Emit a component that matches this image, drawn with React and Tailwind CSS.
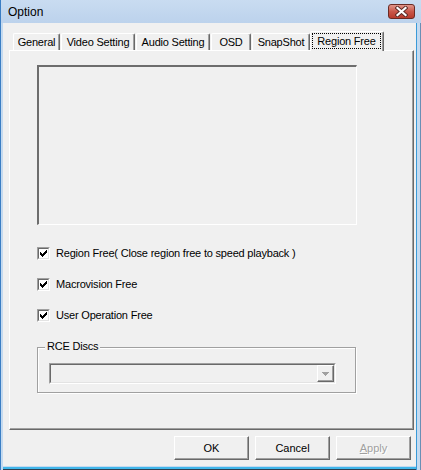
import React from 'react';

const font = "font-['Liberation_Sans',Arial,sans-serif]";

const tabs = [
  { label: 'General', w: 'w-[47px]', gap: '' },
  { label: 'Video Setting', w: 'w-[74px]', gap: 'ml-[1px]' },
  { label: 'Audio Setting', w: 'w-[74px]', gap: 'ml-[1px]' },
  { label: 'OSD', w: 'w-[40px]', gap: 'ml-[1px]' },
  { label: 'SnapShot', w: 'w-[58px]', gap: 'ml-[1px]' },
];

const Check = ({ label }) => (
  <div className="flex items-center h-[13px]">
    {/* classic sunken checkbox */}
    <div className="w-[13px] h-[13px] border-[1px] border-t-[#a0a0a0] border-l-[#a0a0a0] border-r-white border-b-white">
      <div className="w-full h-full bg-white border-[1px] border-t-[#696969] border-l-[#696969] border-r-[#e3e3e3] border-b-[#e3e3e3] flex items-center justify-center">
        <svg width="7" height="7" viewBox="0 0 7 7" shapeRendering="crispEdges">
          <path d="M0 2h1v3h-1zM1 3h1v3h-1zM2 4h1v3h-1zM3 3h1v3h-1zM4 2h1v3h-1zM5 1h1v3h-1zM6 0h1v3h-1z" fill="#000" />
        </svg>
      </div>
    </div>
    <span className="ml-[6px] text-[11px] tracking-[-0.2px] text-black leading-none">{label}</span>
  </div>
);

const Btn = ({ children, disabled }) => (
  <div className="w-[75px] h-[24px] border-[1px] border-t-white border-l-white border-r-[#696969] border-b-[#696969] shadow-[inset_-1px_-1px_0_#a0a0a0] bg-[#f0f0f0] flex items-center justify-center">
    <span
      className={
        disabled
          ? 'text-[11px] text-[#a0a0a0] [text-shadow:1px_1px_0_#ffffff]'
          : 'text-[11px] text-black'
      }
    >
      {children}
    </span>
  </div>
);

export default function App() {
  return (
    <div className={`w-[421px] h-[470px] flex flex-col bg-[#c2d7ee] ${font}`}>
      {/* title bar */}
      <div className="h-[23px] flex items-center justify-between pl-[7px] pr-[6px] bg-gradient-to-b from-[#c9dcf1] to-[#bcd2ec] border-l-[1px] border-[#3b7ec4]">
        <span className="text-[12px] text-black leading-none pt-[1px]">Option</span>
        <div className="w-[27px] h-[15px] mt-[0px] rounded-[3px] border-[1px] border-[#6b2b24] bg-gradient-to-b from-[#e0958a] via-[#c9574a] to-[#b83a2c] flex items-center justify-center">
          <svg width="13" height="11" viewBox="0 0 13 11">
            <path d="M2.5 2 L10.5 9 M10.5 2 L2.5 9" stroke="#5a2a26" strokeWidth="4" strokeLinecap="square" />
            <path d="M2.5 2 L10.5 9 M10.5 2 L2.5 9" stroke="#ffffff" strokeWidth="2.2" strokeLinecap="square" />
          </svg>
        </div>
      </div>

      {/* window body with frame */}
      <div className="flex-1 flex">
        <div className="w-[1px] bg-[#3b7ec4]" />
        <div className="w-[2px] bg-[#c4daf0]" />
        <div className="flex-1 flex flex-col">
          <div className="w-[413px] h-[443px] bg-[#f0f0f0] flex flex-col pt-[8px] pl-[6px]">
            {/* tabs */}
            <div className="flex items-end h-[20px] -mb-[1px] pl-[4px] relative z-10">
              {tabs.map((t) => (
                <div
                  key={t.label}
                  className={`${t.w} ${t.gap} h-[17px] mb-[1px] border-l-[1px] border-t-[1px] border-l-white border-t-white border-r-[1px] border-r-[#696969] shadow-[inset_-1px_0_0_#a0a0a0] rounded-t-[2px] flex items-center justify-center`}
                >
                  <span className="text-[11px] tracking-[-0.2px] text-black leading-none">{t.label}</span>
                </div>
              ))}
              <div className="w-[74px] h-[20px] border-l-[1px] border-t-[1px] border-l-white border-t-white border-r-[1px] border-r-[#696969] shadow-[inset_-1px_0_0_#a0a0a0] rounded-t-[2px] bg-[#f0f0f0] p-[1px] pr-[2px] pb-[2px]">
                <div className="w-full h-full border-[1px] border-dotted border-black flex items-center justify-center">
                  <span className="text-[11px] tracking-[-0.2px] text-black leading-none">Region Free</span>
                </div>
              </div>
            </div>

            {/* tab panel */}
            <div className="w-[405px] h-[380px] border-[1px] border-t-white border-l-white border-r-[#696969] border-b-[#696969] shadow-[inset_-1px_-1px_0_#a0a0a0] pt-[14px] pl-[27px] flex flex-col">
              <div className="w-[320px] h-[160px] border-t-[2px] border-l-[2px] border-t-[#6d6d6d] border-l-[#6d6d6d] border-b-[1px] border-r-[1px] border-b-white border-r-white" />

              <div className="mt-[22px] flex flex-col gap-[18px]">
                <Check label="Region Free( Close region free to speed playback )" />
                <Check label="Macrovision Free" />
                <Check label="User Operation Free" />
              </div>

              {/* group box */}
              <div className="relative mt-[25px] w-[319px] h-[46px] border-[1px] border-[#a0a0a0] shadow-[1px_1px_0_#ffffff,inset_1px_1px_0_#ffffff] pt-[15px] pl-[11px]">
                <span className="absolute left-[7px] -top-[7px] px-[2px] bg-[#f0f0f0] text-[11px] tracking-[-0.2px] text-black leading-none">
                  RCE Discs
                </span>
                <div className="w-[287px] h-[21px] border-[1px] border-t-[#a0a0a0] border-l-[#a0a0a0] border-r-white border-b-white">
                  <div className="w-full h-full border-[1px] border-t-[#696969] border-l-[#696969] border-r-[#e3e3e3] border-b-[#e3e3e3] bg-[#f0f0f0] flex justify-end">
                    <div className="w-[17px] h-full border-[1px] border-t-white border-l-white border-r-[#696969] border-b-[#696969] shadow-[inset_-1px_-1px_0_#a0a0a0] flex items-center justify-center">
                      <svg width="7" height="4" viewBox="0 0 7 4" shapeRendering="crispEdges">
                        <path d="M0 0h7v1h-1v1h-1v1h-1v1h-1v-1h-1v-1h-1v-1h-1z" fill="#a0a0a0" />
                      </svg>
                    </div>
                  </div>
                </div>
              </div>
            </div>

            {/* buttons */}
            <div className="mt-[6px] flex justify-end gap-[6px] pr-[5px]">
              <Btn>OK</Btn>
              <Btn>Cancel</Btn>
              <Btn disabled>
                <span className="underline">A</span>pply
              </Btn>
            </div>
          </div>
          <div className="h-[1px] bg-[#c4daf0]" />
          <div className="h-[2px] bg-[#40b6ea]" />
          <div className="h-[1px] bg-[#2d3e50]" />
        </div>
        <div className="w-[1px] bg-[#3a9ad8]" />
        <div className="w-[3px] bg-[#c4daf0]" />
        <div className="w-[1px] bg-[#6a8fb5]" />
      </div>
    </div>
  );
}
